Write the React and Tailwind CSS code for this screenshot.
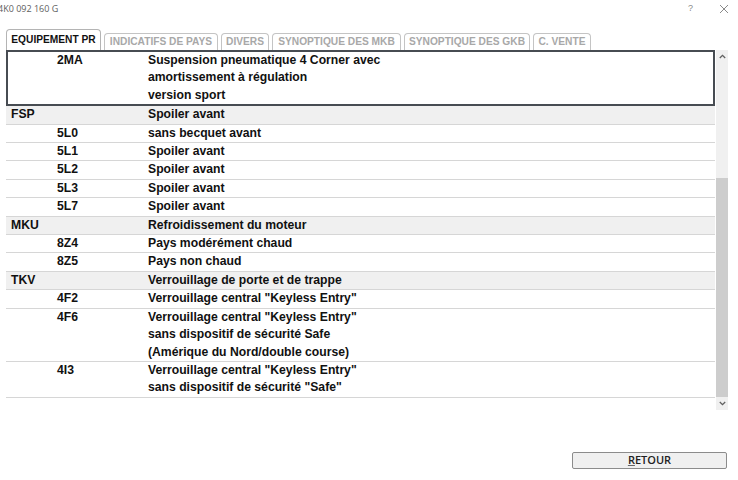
import React from "react";

const rows = [
  { g: "", c: "2MA", d: ["Suspension pneumatique 4 Corner avec", "amortissement à régulation", "version sport"], sel: true },
  { g: "FSP", c: "", d: ["Spoiler avant"], head: true },
  { g: "", c: "5L0", d: ["sans becquet avant"] },
  { g: "", c: "5L1", d: ["Spoiler avant"] },
  { g: "", c: "5L2", d: ["Spoiler avant"] },
  { g: "", c: "5L3", d: ["Spoiler avant"] },
  { g: "", c: "5L7", d: ["Spoiler avant"] },
  { g: "MKU", c: "", d: ["Refroidissement du moteur"], head: true },
  { g: "", c: "8Z4", d: ["Pays modérément chaud"] },
  { g: "", c: "8Z5", d: ["Pays non chaud"] },
  { g: "TKV", c: "", d: ["Verrouillage de porte et de trappe"], head: true },
  { g: "", c: "4F2", d: ["Verrouillage central \"Keyless Entry\""] },
  { g: "", c: "4F6", d: ["Verrouillage central \"Keyless Entry\"", "sans dispositif de sécurité Safe", "(Amérique du Nord/double course)"] },
  { g: "", c: "4I3", d: ["Verrouillage central \"Keyless Entry\"", "sans dispositif de sécurité \"Safe\""] },
];

const tabs = [
  { t: "INDICATIFS DE PAYS", w: "w-[114px]" },
  { t: "DIVERS", w: "w-[48px]" },
  { t: "SYNOPTIQUE DES MKB", w: "w-[129px]" },
  { t: "SYNOPTIQUE DES GKB", w: "w-[126px]" },
  { t: "C. VENTE", w: "w-[58px]" },
];

function Row({ r }) {
  const base = "flex text-[12.2px] font-bold leading-[17.4px] text-[#111]";
  const cls = r.sel
    ? base + " border-2 border-[#474c52] bg-white"
    : r.head
    ? base + " bg-[#f0f0f0] border-b border-[#d6d6d6]"
    : base + " bg-white border-b border-[#d6d6d6]";
  return (
    <div className={cls}>
      <div className={r.sel ? "w-[3px] shrink-0" : "w-[5px] shrink-0"} />
      <div className="w-[46px] shrink-0">{r.g}</div>
      <div className="w-[91px] shrink-0">{r.c}</div>
      <div className="flex flex-col">
        {r.d.map((l, i) => (
          <div key={i}>{l}</div>
        ))}
      </div>
    </div>
  );
}

export default function App() {
  return (
    <div className="w-[738px] h-[480px] bg-white overflow-hidden font-['Liberation_Sans',Arial,sans-serif]">
      <div className="h-[17px] flex items-center justify-between">
        <div className="text-[9px] text-[#606060] -ml-[2px] font-['Open_Sans',sans-serif] whitespace-nowrap">4K0 092 160 G</div>
        <div className="flex items-center text-[#8a8a8a]">
          <span className="text-[9px] mr-[26px]">?</span>
          <svg width="10" height="10" viewBox="0 0 10 10" className="mr-[9px]">
            <path d="M1 1 L9 9 M9 1 L1 9" stroke="#8a8a8a" strokeWidth="1" fill="none" />
          </svg>
        </div>
      </div>
      <div className="mt-[12px] ml-[6px] flex items-end gap-[3px] h-[21px]">
        <div className="w-[95px] h-[21px] border border-b-0 border-[#b4b4b4] rounded-t-[4px] bg-white flex items-center justify-center text-[10.2px] font-bold text-[#111] whitespace-nowrap">
          EQUIPEMENT PR
        </div>
        {tabs.map((t, i) => (
          <div
            key={i}
            className={t.w + " h-[17px] border border-b-0 border-[#c4c4c4] rounded-t-[4px] bg-white flex items-center justify-center text-[10.2px] font-bold text-[#a8a8a8] whitespace-nowrap"}
          >
            {t.t}
          </div>
        ))}
      </div>
      <div className="flex h-[360px]">
        <div className="ml-[6px] w-[709px] h-[360px] overflow-hidden">
          {rows.map((r, i) => (
            <Row key={i} r={r} />
          ))}
        </div>
        <div className="ml-[1px] w-[12px] h-[360px] bg-[#f0f0f0] flex flex-col">
          <div className="h-[13px] flex items-center justify-center">
            <svg width="7" height="5" viewBox="0 0 7 5">
              <path d="M0.8 4 L3.5 1.3 L6.2 4" stroke="#606060" strokeWidth="1.3" fill="none" />
            </svg>
          </div>
          <div className="h-[115px]" />
          <div className="h-[219px] bg-[#cdcdcd]" />
          <div className="h-[13px] flex items-center justify-center">
            <svg width="7" height="5" viewBox="0 0 7 5">
              <path d="M0.8 1 L3.5 3.7 L6.2 1" stroke="#606060" strokeWidth="1.3" fill="none" />
            </svg>
          </div>
        </div>
      </div>
      <div className="mt-[42px] flex">
        <div className="ml-[572px] w-[155px] h-[17px] border border-[#8c8c8c] rounded-[2px] bg-[#f0f0f0] flex items-center justify-center text-[11px] text-[#222] font-['Open_Sans',sans-serif] font-semibold">
          <span className="underline decoration-[#666] underline-offset-1">R</span>ETOUR
        </div>
      </div>
    </div>
  );
}
